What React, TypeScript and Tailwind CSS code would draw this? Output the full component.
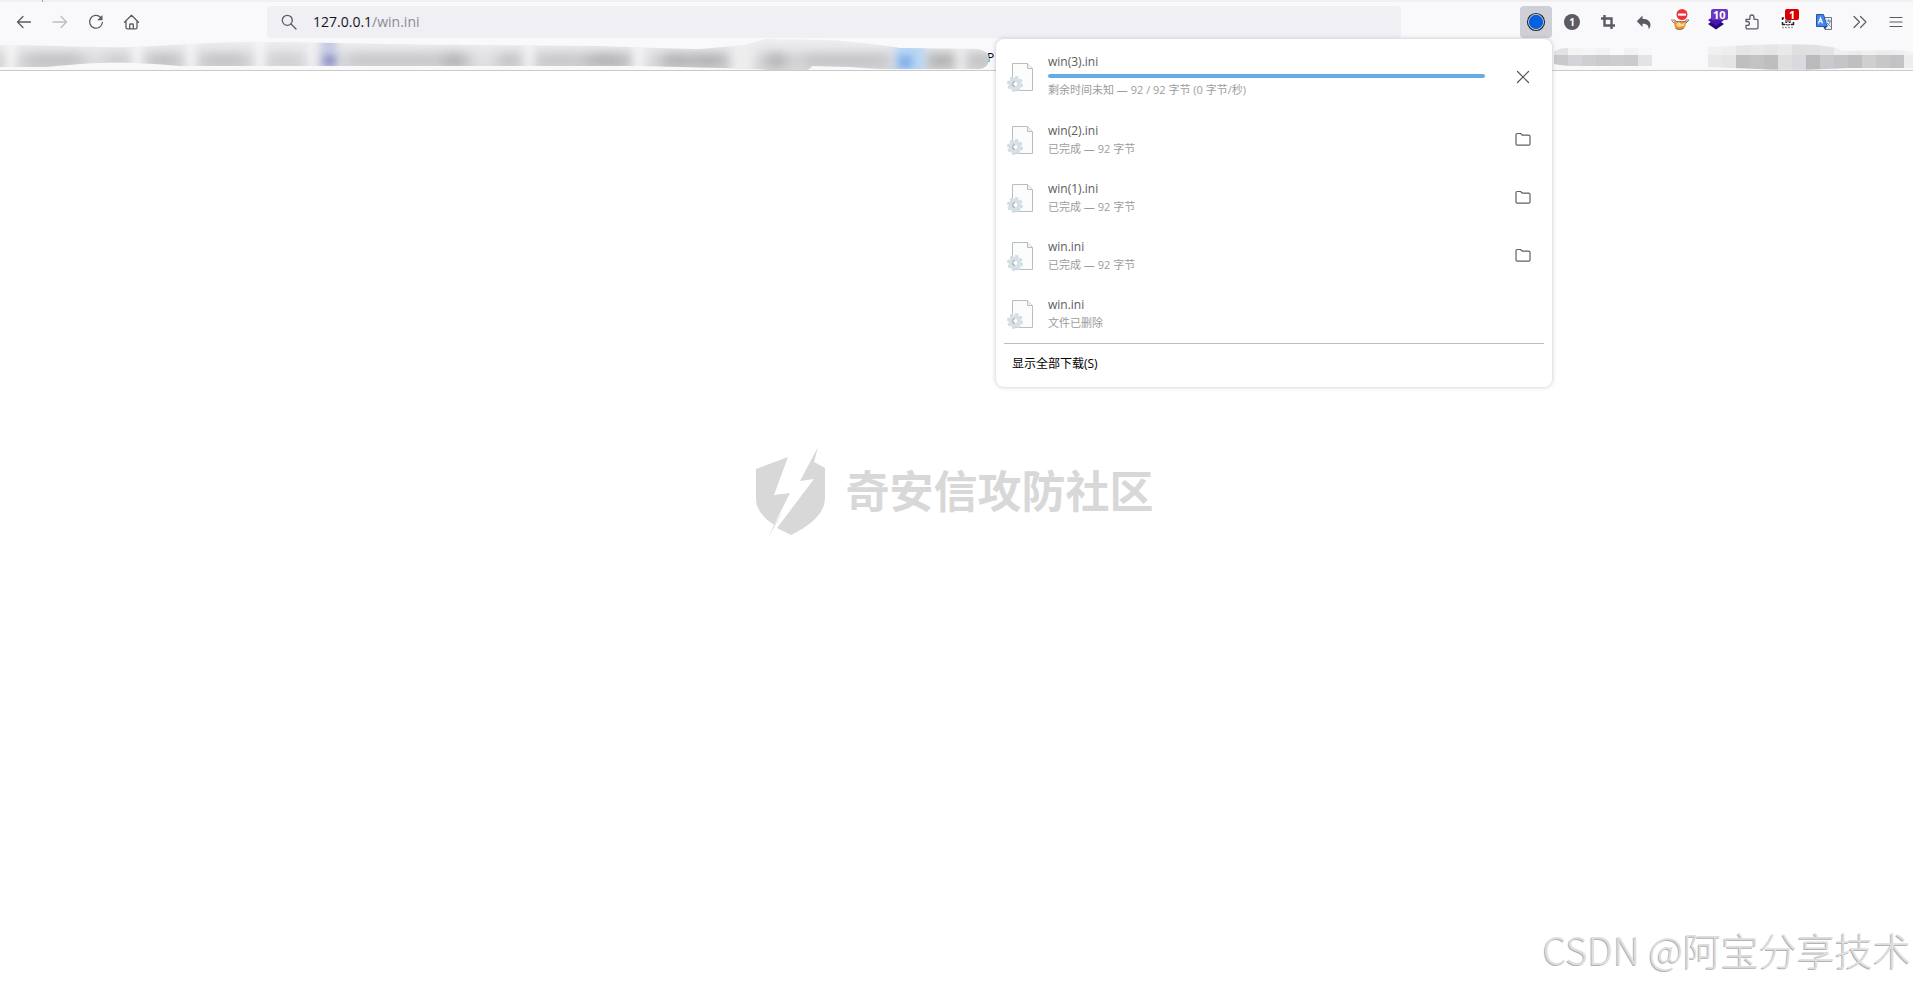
import React from "react";

type Patch = [x: number, width: number, color: string];

const patches: Patch[] = [
  [-6, 9, "#b4b4af"], [24, 60, "#b6b6b8"], [106, 22, "#c0c0c2"], [148, 32, "#b2b2b4"],
  [200, 48, "#b8b8bb"], [268, 34, "#c8c8ca"], [345, 95, "#bebec0"], [444, 22, "#969698"],
  [501, 17, "#a8a8aa"], [535, 44, "#bdbdbf"], [584, 46, "#a2a2a4"], [660, 30, "#a0a0a2"],
  [692, 36, "#a0a0a2"], [766, 20, "#949496"], [800, 90, "#b8b8bf"], [926, 30, "#9c9c9c"], [966, 30, "#b4b4b6"],
];

const gaps: Patch[] = [
  [7, 8, "#f8f8fa"], [133, 8, "#f6f6f8"], [187, 8, "#f6f6f8"], [256, 8, "#f8f8fa"], [308, 8, "#f2f2f5"],
  [525, 8, "#f4f4f6"], [634, 10, "#f3f3f5"], [732, 20, "#ededee"], [957, 8, "#efeff1"],
];

const outline =
  "M0 7 C50 7 90 10 130 9 S200 4 260 4 S400 7 480 7 L600 8 Q680 11 700 11 L745 7 L765 1 L830 2 Q870 5 900 10 L978 11 Q989 13 989 21 T980 31 L950 31 L880 31 L850 29 L812 28 Q810 33 800 33 L780 33 Q750 30 720 30 L640 28 L180 28 Q120 22 80 26 L45 29 L0 29 Z";

function ObscuredBookmarks() {
  return (
    <svg className="relative z-10 shrink-0" width="989" height="32" aria-hidden="true" overflow="visible">
      <defs>
        <clipPath id="strip"><path d={outline} /></clipPath>
        <filter id="soft" x="-5%" y="-100%" width="110%" height="300%" colorInterpolationFilters="sRGB"><feGaussianBlur stdDeviation="9 6" /></filter>
        <filter id="softer" x="-5%" y="-60%" width="110%" height="220%" colorInterpolationFilters="sRGB"><feGaussianBlur stdDeviation="4 3" /></filter>
        <linearGradient id="fade" x1="0" y1="0" x2="0" y2="1">
          <stop offset="0" stopColor="#efeff1" />
          <stop offset="1" stopColor="#dcdcde" />
        </linearGradient>
      </defs>
      <g clipPath="url(#strip)">
        <rect width="990" height="34" fill="url(#fade)" />
        <g filter="url(#soft)" opacity="0.85">
          {patches.map(([x, w, c]) => <rect key={x} x={x} y="16" width={w} height="13" fill={c} />)}
        </g>
        <g filter="url(#softer)">
          {gaps.map(([x, w, c]) => <rect key={x} x={x} y="-4" width={w} height="42" fill={c} />)}
          <rect x="321" y="-2" width="16" height="38" fill="#c6c9e2" />
          <rect x="323" y="17" width="13" height="11" fill="#9095c6" />
          <rect x="895" y="-2" width="30" height="38" fill="#b9d6f3" />
          <rect x="898" y="17" width="14" height="14" fill="#83b3ea" />
        </g>
      </g>
    </svg>
  );
}

const mosaicA = {
  top: ["#e2e2e4", "#f3f3f4", "#f5f5f7", "#f2f2f3", "#f9f9fb", "#f2f2f3", "#f7f7f9"],
  bottom: ["#c9c9cc", "#d3d3d8", "#cfcfd2", "#cbcbce", "#cdcdd0", "#cbcbcd", "#e3e3e5"],
};
const mosaicB = {
  top: ["#f0f0f1", "#eeeeef", "#e5e5e6", "#e8e8e9", "#e5e5e6", "#e9e9ea", "#dfdfe0", "#e0e0e2", "#e3e3e5", "#efeff0", "#ebebec", "#efeff0", "#ebebec", "#eeeeef", "#f2f2f4"],
  bottom: ["#e8e8e9", "#e5e5e6", "#bfbfc0", "#c3c3c4", "#bebebf", "#dfdfe1", "#d9d9df", "#bbb9bc", "#c9c9ce", "#c5c5c9", "#bfbfc2", "#cfcfcd", "#c7c7ca", "#c3c3c5", "#ededef"],
};

function Mosaic({ top, bottom, crest, width }: { top: string[]; bottom: string[]; crest: string; width: number }) {
  const id = `mosaic-${top.length}`;
  return (
    <svg className="shrink-0" width={width} height="32" aria-hidden="true">
      <clipPath id={id}><path d={crest} /></clipPath>
      <g clipPath={`url(#${id})`} shapeRendering="crispEdges">
        {top.map((c, i) => <rect key={i} x={i * 14} y="0" width="14" height="17" fill={c} />)}
        {bottom.map((c, i) => <rect key={i} x={i * 14} y="17" width="14" height="15" fill={c} />)}
      </g>
    </svg>
  );
}

function ToolButton({ label, active, children }: { label: string; active?: boolean; children: React.ReactNode }) {
  return (
    <button
      type="button"
      aria-label={label}
      className={`flex size-8 shrink-0 items-center justify-center rounded text-[#5b5b66] ${active ? "bg-[#cfcfd8]" : ""}`}
    >
      {children}
    </button>
  );
}

function Icon({ children, className = "size-4" }: { children: React.ReactNode; className?: string }) {
  return (
    <svg viewBox="0 0 16 16" className={className} fill="none" stroke="currentColor" strokeWidth="1.3" strokeLinecap="round" strokeLinejoin="round" overflow="visible" aria-hidden="true">
      {children}
    </svg>
  );
}

function Toolbar() {
  return (
    <nav className="flex h-9 items-center gap-1 pt-1 pr-px pl-2">
      <ToolButton label="后退"><Icon><path d="M14.500 8H1.500M7 2.500 1.500 8 7 13.500" /></Icon></ToolButton>
      <ToolButton label="前进"><Icon className="size-4 text-[#bdbdc3]"><path d="M1 8h13.500M9 2.500 14.500 8 9 13.500" /></Icon></ToolButton>
      <ToolButton label="重新载入">
        <Icon><path d="M12.500 3.200A6.400 6.400 0 1 0 14.400 8.500" /><path d="M14.500 1v5.300H9.200z" fill="currentColor" stroke="none" /></Icon>
      </ToolButton>
      <ToolButton label="主页">
        <Icon><path d="M.5 8.200 7.500 1.200l7 7M2 7v6.500q0 1.300 1.300 1.300h8.400q1.300 0 1.300-1.300V7M5.700 14.800v-4q0-.8.8-.8h2q.8 0 .8.800v4" /></Icon>
      </ToolButton>
      <div className="mr-[115px] ml-[115px] flex h-8 min-w-40 flex-1 items-center rounded bg-[#f0f0f4] pl-3.5">
        <Icon className="size-4 shrink-0 text-[#5b5b66]"><circle cx="6.300" cy="6.300" r="5" /><path d="m10 10 5 5" /></Icon>
        <div className="relative ml-4 flex-1 text-sm">
          <input aria-label="地址" defaultValue="127.0.0.1/win.ini" className="block w-full bg-transparent text-transparent caret-black outline-none" />
          <div aria-hidden="true" className="pointer-events-none absolute inset-0 text-[#15141a]">127.0.0.1<span className="text-[#8a8a92]">/win.ini</span></div>
        </div>
      </div>
      <ToolButton label="下载" active>
        <svg viewBox="0 0 20 20" className="size-5" aria-hidden="true"><circle cx="10" cy="10" r="8.500" fill="#e4e8f0" stroke="#25252d" strokeWidth="1.200" /><circle cx="10" cy="10" r="7.200" fill="#0561e0" /></svg>
      </ToolButton>
      <ToolButton label="容器 1"><span className="flex size-4 items-center justify-center rounded-full bg-[#5b5b66] text-[10px] font-bold text-white">1</span></ToolButton>
      <ToolButton label="截图"><Icon><g strokeWidth="2.400" strokeLinecap="butt" strokeLinejoin="miter"><path d="M4.500 1v10.500H15M1 4.500h10.500V15" /></g></Icon></ToolButton>
      <ToolButton label="撤销"><Icon><path d="M6.500 1.500v3.200c5.500 0 8 3 8 6.300 0 1.800-.9 3.500-2 4 .4-3.800-1.800-5.200-6-5.200V13L.8 7.200z" fill="currentColor" stroke="none" /></Icon></ToolButton>
      <ToolButton label="拦截">
        <svg viewBox="0 0 20 22" className="-mt-1 h-[22px] w-5" aria-hidden="true">
          <path d="M3 0h16v12h-2v9H4v-9H1V9h2z" fill="#fff" />
          <path d="M4 12h13l-2 6c-1 2-3 3-5.500 3S5 19.500 4.500 17z" fill="#e89437" />
          <path d="m6 15 3-2 2 2 4-1-1 3-6 1z" fill="#f9d296" />
          <path d="M1 11h4l1 1.500h9l1-1.500h3l-3 3M2 12l2.500 2.500M5.500 19.500q4 2 8 0" fill="none" stroke="#8a7767" />
          <circle cx="12" cy="5.500" r="5.500" fill="#f0303a" /><rect x="8" y="4.500" width="8" height="2.200" fill="#fff" />
        </svg>
      </ToolButton>
      <ToolButton label="图层">
        <span className="relative block size-4">
          <svg viewBox="0 0 16 16" className="size-4" overflow="visible" aria-hidden="true"><path d="m0 10 8 5.500 8-5.500-3-2H3z" fill="#240a74" /><path d="m0 6 8-5 8 5-8 6z" fill="#4b12b4" /></svg>
          <span className="absolute -top-[5px] left-[3px] rounded-xs bg-[#6939c0] px-0.5 text-[11px] leading-[11px] font-bold text-white">10</span>
        </span>
      </ToolButton>
      <ToolButton label="扩展">
        <Icon><path d="M2 5.300h3.300q.6 0 .6-.6V3a2 2 0 0 1 4 0v1.700q0 .6.600.600h2.200q1.300 0 1.300 1.300v7q0 1.300-1.300 1.300H3.300q-1.300 0-1.300-1.300v-2.300h1.500a1.900 1.900 0 0 0 0-3.800H2z" /></Icon>
      </ToolButton>
      <ToolButton label="用户脚本">
        <span className="relative block size-4">
          <svg viewBox="0 0 16 16" className="size-4" overflow="visible" aria-hidden="true">
            <rect x="0" y="0" width="16" height="16" fill="#fff" />
            <path d="M4 4H2.500v2M2.500 8v2.500H5M11 10.500h2.500V8" fill="none" stroke="#202024" strokeWidth="1.500" /><path d="M5 6h6v2.500H5z" fill="#8a8d90" /><path d="M5.500 8.500h1.500m2 0h1.500M5.500 10.500q2.500 1 5 0" fill="none" stroke="#222" /><path d="M2 13.500h12" stroke="#a0a0a0" strokeWidth="1.500" strokeDasharray="2 1" />
          </svg>
          <span className="absolute -top-[5px] left-[5px] rounded-xs bg-[#d90000] px-1 text-[11px] leading-[11px] font-bold text-white">1</span>
        </span>
      </ToolButton>
      <ToolButton label="翻译">
        <svg viewBox="0 0 16 16" className="size-4" overflow="visible" aria-hidden="true">
          <path d="M7 3.500h8.500v12H9z" fill="#eee" stroke="#73767d" /><path d="M.5.500h7L11 12.500H.5z" fill="#4386ed" stroke="#2b5397" /><path d="m7 12.500 2 3 2-3z" fill="#294b9b" />
          <path d="m2.500 9.500 2-5.500 2 5.500M3.200 7.500h2.700" fill="none" stroke="#fff" strokeWidth="1.200" /><path d="M10.500 7H15m-2.500-1.500V7m1.500 0c0 2-2 4-3 5m0-3 3.500 3.500" fill="none" stroke="#4d86d8" />
        </svg>
      </ToolButton>
      <ToolButton label="更多工具"><Icon><path d="M2 2.500 7.500 8 2 13.500M8.500 2.500 14 8l-5.500 5.500" strokeWidth="1.200" /></Icon></ToolButton>
      <ToolButton label="菜单"><Icon><path d="M2 3.500h12M2 8h12M2 12.500h12" strokeWidth="1.200" /></Icon></ToolButton>
    </nav>
  );
}

function FileIcon() {
  return (
    <svg viewBox="0 0 32 32" className="size-8 shrink-0" aria-hidden="true">
      <path d="M6.500 2.500h15l5 5v22h-20z" fill="#fbfcfc" stroke="#bcbcbc" />
      <path d="M21.500 2.500v5h5" fill="#f1f1f1" stroke="#bcbcbc" />
      <circle cx="9" cy="23" r="6.800" fill="none" stroke="#d0dae0" strokeWidth="2.400" strokeDasharray="3 2.340" />
      <circle cx="9" cy="23" r="4.400" fill="#fff" stroke="#d7e0e6" strokeWidth="4.400" />
      <path d="M9 20.700a2.300 2.300 0 0 0 0 4.600" fill="none" stroke="#aab2b8" strokeWidth="1.300" />
    </svg>
  );
}

interface Download { name: string; detail: string; action?: "cancel" | "open" }

const downloads: Download[] = [
  { name: "win(3).ini", detail: "剩余时间未知 — 92 / 92 字节 (0 字节/秒)", action: "cancel" },
  { name: "win(2).ini", detail: "已完成 — 92 字节", action: "open" },
  { name: "win(1).ini", detail: "已完成 — 92 字节", action: "open" },
  { name: "win.ini", detail: "已完成 — 92 字节", action: "open" },
  { name: "win.ini", detail: "文件已删除" },
];

function DownloadRow({ name, detail, action }: Download) {
  const active = action === "cancel";
  return (
    <li className={`flex items-center ${active ? "h-[68px]" : "h-[58px]"}`}>
      <FileIcon />
      <div className="ml-2.5 min-w-0 flex-1">
        <div className="text-xs leading-[18px] text-[#5c5c5c]">{name}</div>
        {active && <div role="progressbar" aria-label={name} aria-valuenow={100} className="my-[3px] h-1 rounded-full bg-[#65ade6]" />}
        <div className={`text-[11px] leading-[18px] text-[#9c9c9c] ${active ? "mb-0.5" : ""}`}>{detail}</div>
      </div>
      <div className="ml-[22px] flex w-8 justify-center">
        {active && (
          <button type="button" aria-label="取消" className="text-[#555]"><Icon><path d="m2.500 2.500 11 11m0-11-11 11" strokeWidth="1.200" /></Icon></button>
        )}
        {action === "open" && (
          <button type="button" aria-label="打开文件夹" className="text-[#606060]">
            <Icon><path d="M1 2.700q0-1.200 1.200-1.200h3.300l2 1.700h6.200q1.300 0 1.300 1.200v7.600q0 1.200-1.200 1.200H2.200Q1 13.200 1 12z" strokeWidth="1.200" /></Icon>
          </button>
        )}
      </div>
    </li>
  );
}

function DownloadsPanel() {
  return (
    <section aria-label="下载" className="absolute top-[39px] right-[361px] w-[556px] rounded-lg bg-white pt-1 shadow-[0_0_4px_rgba(58,57,68,0.3)]">
      <ul className="pr-[13px] pl-2.5">
        {downloads.map((d, i) => <DownloadRow key={i} {...d} />)}
      </ul>
      <div className="mx-2 border-t border-[#bdbdbd]">
        <button type="button" className="block h-[43px] w-full px-2 pb-1 text-left text-xs text-black">显示全部下载(S)</button>
      </div>
    </section>
  );
}

export default function App() {
  return (
    <div className="relative flex min-h-screen flex-col overflow-hidden bg-white font-['Open_Sans','Noto_Sans_CJK_SC',sans-serif]">
      <header className="border-b border-[#cacaca] bg-[#f9f9fb]">
        <div className="flex h-0.5 bg-[#f0f0f2]"><div className="ml-[42px] w-px bg-[#a5a5aa]" /></div>
        <Toolbar />
        <div className="flex h-8 items-center overflow-hidden">
          <ObscuredBookmarks />
          <span className="-ml-0.5 pt-2 text-xs text-black">P</span>
          <div className="flex-1" />
          <Mosaic {...mosaicA} width={98} crest="M0 14Q4 10 14 10H98V28H24Q10 28 0 26Z" />
          <div className="w-14" />
          <Mosaic {...mosaicB} width={205} crest="M0 9 24 8Q80 5 108 7Q130 9 134 13L190 12Q206 13 206 18V30L140 30Q90 33 50 31L0 29Z" />
        </div>
      </header>
      <main className="flex flex-1 items-center justify-center">
        <div className="flex items-center gap-[18px] pr-1.5 pb-[75px] text-[#d8d8d8]">
          <svg viewBox="0 0 74 92" className="h-[92px] w-[74px]" fill="currentColor" aria-hidden="true">
            <path d="M2 24 34 12 20 50 36 48 20 80Q2 68 2 54Z" />
            <path d="M64 2 60 17 71 23V54Q70 74 37 90L23 83 60 34 46 36Z" />
            <path d="M20 80 29 66 14 93Z" />
          </svg>
          <h1 className="text-[44px] leading-none font-bold">奇安信攻防社区</h1>
        </div>
      </main>
      <DownloadsPanel />
      <p className="absolute right-0.5 bottom-2 font-['Noto_Sans_CJK_SC',sans-serif] text-[38px] font-light whitespace-nowrap text-[#dedede] [text-shadow:-1px_1px_0_#b3b3b3]">CSDN @阿宝分享技术</p>
    </div>
  );
}
